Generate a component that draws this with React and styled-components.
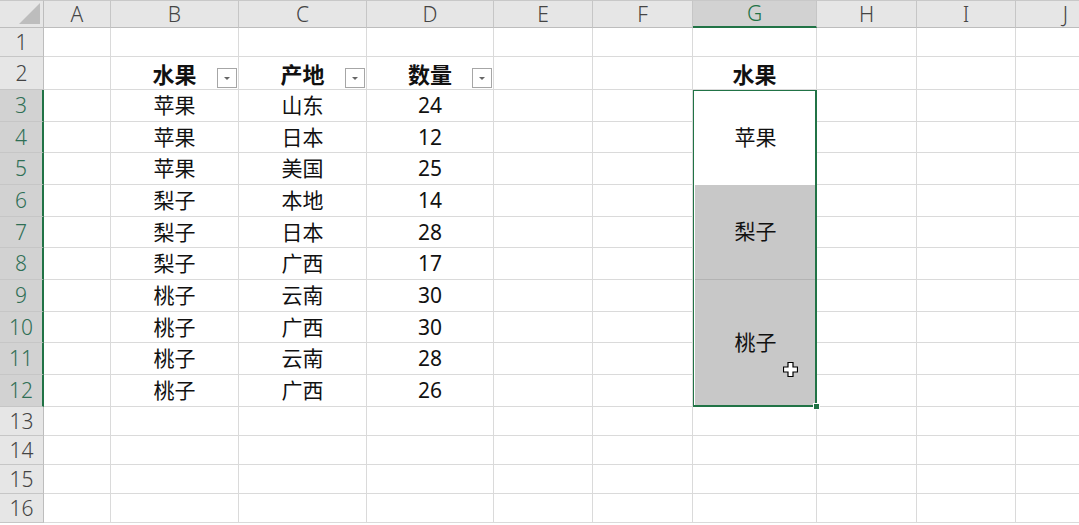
import React from "react";
import styled, { createGlobalStyle } from "styled-components";

const GlobalStyle = createGlobalStyle`
  body {
    margin: 0;
    background: #fff;
    overflow: hidden;
    font-family: "Noto Sans", "Noto Sans CJK SC", sans-serif;
  }
`;

const columns = [
  { key: "A", w: 67 },
  { key: "B", w: 128 },
  { key: "C", w: 128 },
  { key: "D", w: 127 },
  { key: "E", w: 99 },
  { key: "F", w: 100 },
  { key: "G", w: 124 },
  { key: "H", w: 100 },
  { key: "I", w: 99 },
  { key: "J", w: 100 },
];

// sheet rows 1..16
const rowHeights = [29, 33, 32, 31, 32, 32, 31, 32, 32, 31, 32, 32, 29, 29, 29, 29];

const data = [
  ["苹果", "山东", 24],
  ["苹果", "日本", 12],
  ["苹果", "美国", 25],
  ["梨子", "本地", 14],
  ["梨子", "日本", 28],
  ["梨子", "广西", 17],
  ["桃子", "云南", 30],
  ["桃子", "广西", 30],
  ["桃子", "云南", 28],
  ["桃子", "广西", 26],
];

const App = () => {
  const rows = [];
  rowHeights.forEach((_, i) => {
    const r = i + 1;
    const selected = r >= 3 && r <= 12;
    rows.push(
      <RowHead key={"rh" + r} $active={selected}>
        {r}
      </RowHead>
    );
    columns.forEach((c) => {
      if (c.key === "G" && selected) return;
      let content = null;
      let filter = false;
      let bold = false;
      if (r === 2) {
        if (c.key === "B") { content = "水果"; filter = true; bold = true; }
        if (c.key === "C") { content = "产地"; filter = true; bold = true; }
        if (c.key === "D") { content = "数量"; filter = true; bold = true; }
        if (c.key === "G") { content = "水果"; bold = true; }
      }
      if (selected) {
        const d = data[r - 3];
        if (c.key === "B") content = d[0];
        if (c.key === "C") content = d[1];
        if (c.key === "D") content = d[2];
      }
      rows.push(
        <Cell key={c.key + r} $bold={bold}>
          {content}
          {filter && (
            <FilterButton>
              <FilterArrow />
            </FilterButton>
          )}
        </Cell>
      );
    });
  });

  return (
    <>
      <GlobalStyle />
      <Sheet>
        <Corner>
          <CornerTriangle />
        </Corner>
        {columns.map((c) => (
          <ColHead key={c.key} $active={c.key === "G"}>
            {c.key}
          </ColHead>
        ))}
        <SelectionBlock>
          <MergedCell $h={95}>苹果</MergedCell>
          <MergedCell $h={95} $shaded>梨子</MergedCell>
          <MergedCell $h={127} $shaded $divider>
            桃子
            <Cursor width="15" height="15" viewBox="0 0 15 15">
              <path
                d="M5 0.5 H10 V5 H14.5 V10 H10 V14.5 H5 V10 H0.5 V5 H5 Z"
                fill="#fff"
                stroke="#000"
                strokeWidth="1.2"
              />
            </Cursor>
          </MergedCell>
          <FillHandle />
        </SelectionBlock>
        {rows}
      </Sheet>
    </>
  );
};

export default App;

const Sheet = styled.div`
  display: grid;
  grid-template-columns: 44px ${columns.map((c) => c.w + "px").join(" ")};
  grid-template-rows: 28px ${rowHeights.map((h) => h + "px").join(" ")};
  width: 1079px;
  height: 525px;
  overflow: hidden;
  font-family: "Noto Sans", "Noto Sans CJK SC", sans-serif;
`;

const Corner = styled.div`
  position: relative;
  background: #e6e6e6;
  border-right: 1px solid #bdbdbd;
  border-bottom: 1px solid #bdbdbd;
  border-top: 1px solid #c8c8c8;
  box-sizing: border-box;
`;

const CornerTriangle = styled.div`
  position: absolute;
  right: 3px;
  bottom: 3px;
  width: 0;
  height: 0;
  border-left: 21px solid transparent;
  border-bottom: 21px solid #bdbdbd;
`;

const ColHead = styled.div`
  display: flex;
  align-items: center;
  justify-content: center;
  box-sizing: border-box;
  background: ${(p) => (p.$active ? "#d2d2d2" : "#e6e6e6")};
  color: ${(p) => (p.$active ? "#217346" : "#444")};
  border-top: 1px solid #c8c8c8;
  border-right: 1px solid #c6c6c6;
  border-bottom: ${(p) => (p.$active ? "2px solid #217346" : "1px solid #bdbdbd")};
  font-size: 21px;
  font-weight: 300;
  line-height: 1;
`;

const RowHead = styled.div`
  display: flex;
  align-items: center;
  justify-content: center;
  box-sizing: border-box;
  background: ${(p) => (p.$active ? "#d2d2d2" : "#e6e6e6")};
  color: ${(p) => (p.$active ? "#2f6f55" : "#444")};
  border-bottom: 1px solid #c6c6c6;
  border-right: ${(p) => (p.$active ? "2px solid #217346" : "1px solid #bdbdbd")};
  font-size: 21px;
  font-weight: 300;
  line-height: 1;
`;

const Cell = styled.div`
  position: relative;
  display: flex;
  align-items: center;
  justify-content: center;
  box-sizing: border-box;
  border-right: 1px solid #dadada;
  border-bottom: 1px solid #dadada;
  font-family: "Noto Sans", "Noto Sans CJK SC", sans-serif;
  font-size: ${(p) => (p.$bold ? "22px" : "21px")};
  font-weight: ${(p) => (p.$bold ? 700 : 400)};
  color: #111;
  line-height: 1;
  padding-top: ${(p) => (p.$bold ? "2px" : "0")};
`;

const FilterButton = styled.span`
  position: absolute;
  right: 1px;
  bottom: 1px;
  width: 20px;
  height: 20px;
  box-sizing: border-box;
  border: 1px solid #a6a6a6;
  background: #fff;
  display: flex;
  align-items: center;
  justify-content: center;
`;

const FilterArrow = styled.span`
  width: 0;
  height: 0;
  border-left: 3px solid transparent;
  border-right: 3px solid transparent;
  border-top: 3px solid #666;
  margin-top: 1px;
`;

const SelectionBlock = styled.div`
  grid-column: 8;
  grid-row: 4 / 14;
  position: relative;
  display: flex;
  flex-direction: column;
  box-sizing: border-box;
  padding: 1px 1px 2px 2px;
  background: #fff;

  &::after {
    content: "";
    position: absolute;
    top: -1px;
    left: -1px;
    right: 0;
    bottom: 0;
    border: 2px solid #217346;
    pointer-events: none;
  }
`;

const MergedCell = styled.div`
  position: relative;
  flex: ${(p) => p.$h} 1 0;
  display: flex;
  align-items: center;
  justify-content: center;
  background: ${(p) => (p.$shaded ? "#c8c8c8" : "#fff")};
  border-top: ${(p) => (p.$divider ? "1px solid #b3b3b3" : "none")};
  font-family: "Noto Sans", "Noto Sans CJK SC", sans-serif;
  font-size: 21px;
  color: #111;
  line-height: 1;
`;

const Cursor = styled.svg`
  position: absolute;
  left: 88px;
  top: 82px;
`;

const FillHandle = styled.span`
  position: absolute;
  right: -3px;
  bottom: -3px;
  width: 5px;
  height: 5px;
  background: #217346;
  border: 1px solid #fff;
  z-index: 2;
`;
